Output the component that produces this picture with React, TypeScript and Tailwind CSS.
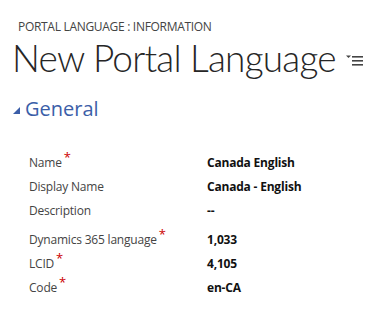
import React from 'react';

const fields = [
  { label: 'Name', value: 'Canada English', required: true, gap: false },
  { label: 'Display Name', value: 'Canada - English', required: false, gap: false },
  { label: 'Description', value: '--', required: false, gap: false },
  { label: 'Dynamics 365 language', value: '1,033', required: true, gap: true },
  { label: 'LCID', value: '4,105', required: true, gap: false },
  { label: 'Code', value: 'en-CA', required: true, gap: false },
];

const MenuIcon = () => (
  <svg width="18" height="12" viewBox="0 0 18 12" className="text-[#444]">
    <path d="M0 0.5h5l-2.5 2.5z" fill="currentColor" />
    <rect x="6" y="1" width="11" height="1.6" fill="currentColor" />
    <rect x="6" y="5" width="11" height="1.6" fill="currentColor" />
    <rect x="6" y="9" width="11" height="1.6" fill="currentColor" />
  </svg>
);

export default function App() {
  return (
    <div className="w-[376px] h-[313px] bg-white overflow-hidden font-['Open_Sans',sans-serif]">
      <div className="pt-[19px] pl-[18px] text-[12px] leading-[16px] text-[#444] tracking-[-0.3px]">
        PORTAL LANGUAGE : INFORMATION
      </div>
      <div className="flex items-center pl-[12px]">
        <h1 className="whitespace-nowrap font-['Lato',sans-serif] text-[37px] leading-[46px] font-light text-[#262626] tracking-[-0.8px]">
          New Portal Language
        </h1>
        <div className="ml-[10px] mt-[6px]">
          <MenuIcon />
        </div>
      </div>
      <div className="flex items-center mt-[15px] pl-[13px]">
        <svg width="7" height="7" viewBox="0 0 7 7" className="mr-[5px] mt-[2px]">
          <path d="M7 0v7H0z" fill="#3b5ea8" />
        </svg>
        <span className="text-[20px] leading-[26px] text-[#3b5ea8]">General</span>
      </div>
      <div className="mt-[29px] pl-[29px] text-[12px]">
        {fields.map((f) => (
          <div key={f.label} className={`flex h-[24px] items-center ${f.gap ? 'mt-[5px]' : ''}`}>
            <div className="w-[178px] text-[#444] tracking-[-0.2px]">
              {f.label}
              {f.required && <span className="text-[#c00] relative top-[-5px] ml-[2px] text-[13px]">*</span>}
            </div>
            <div className="font-bold text-[#111] tracking-[-0.2px]">{f.value}</div>
          </div>
        ))}
      </div>
    </div>
  );
}
